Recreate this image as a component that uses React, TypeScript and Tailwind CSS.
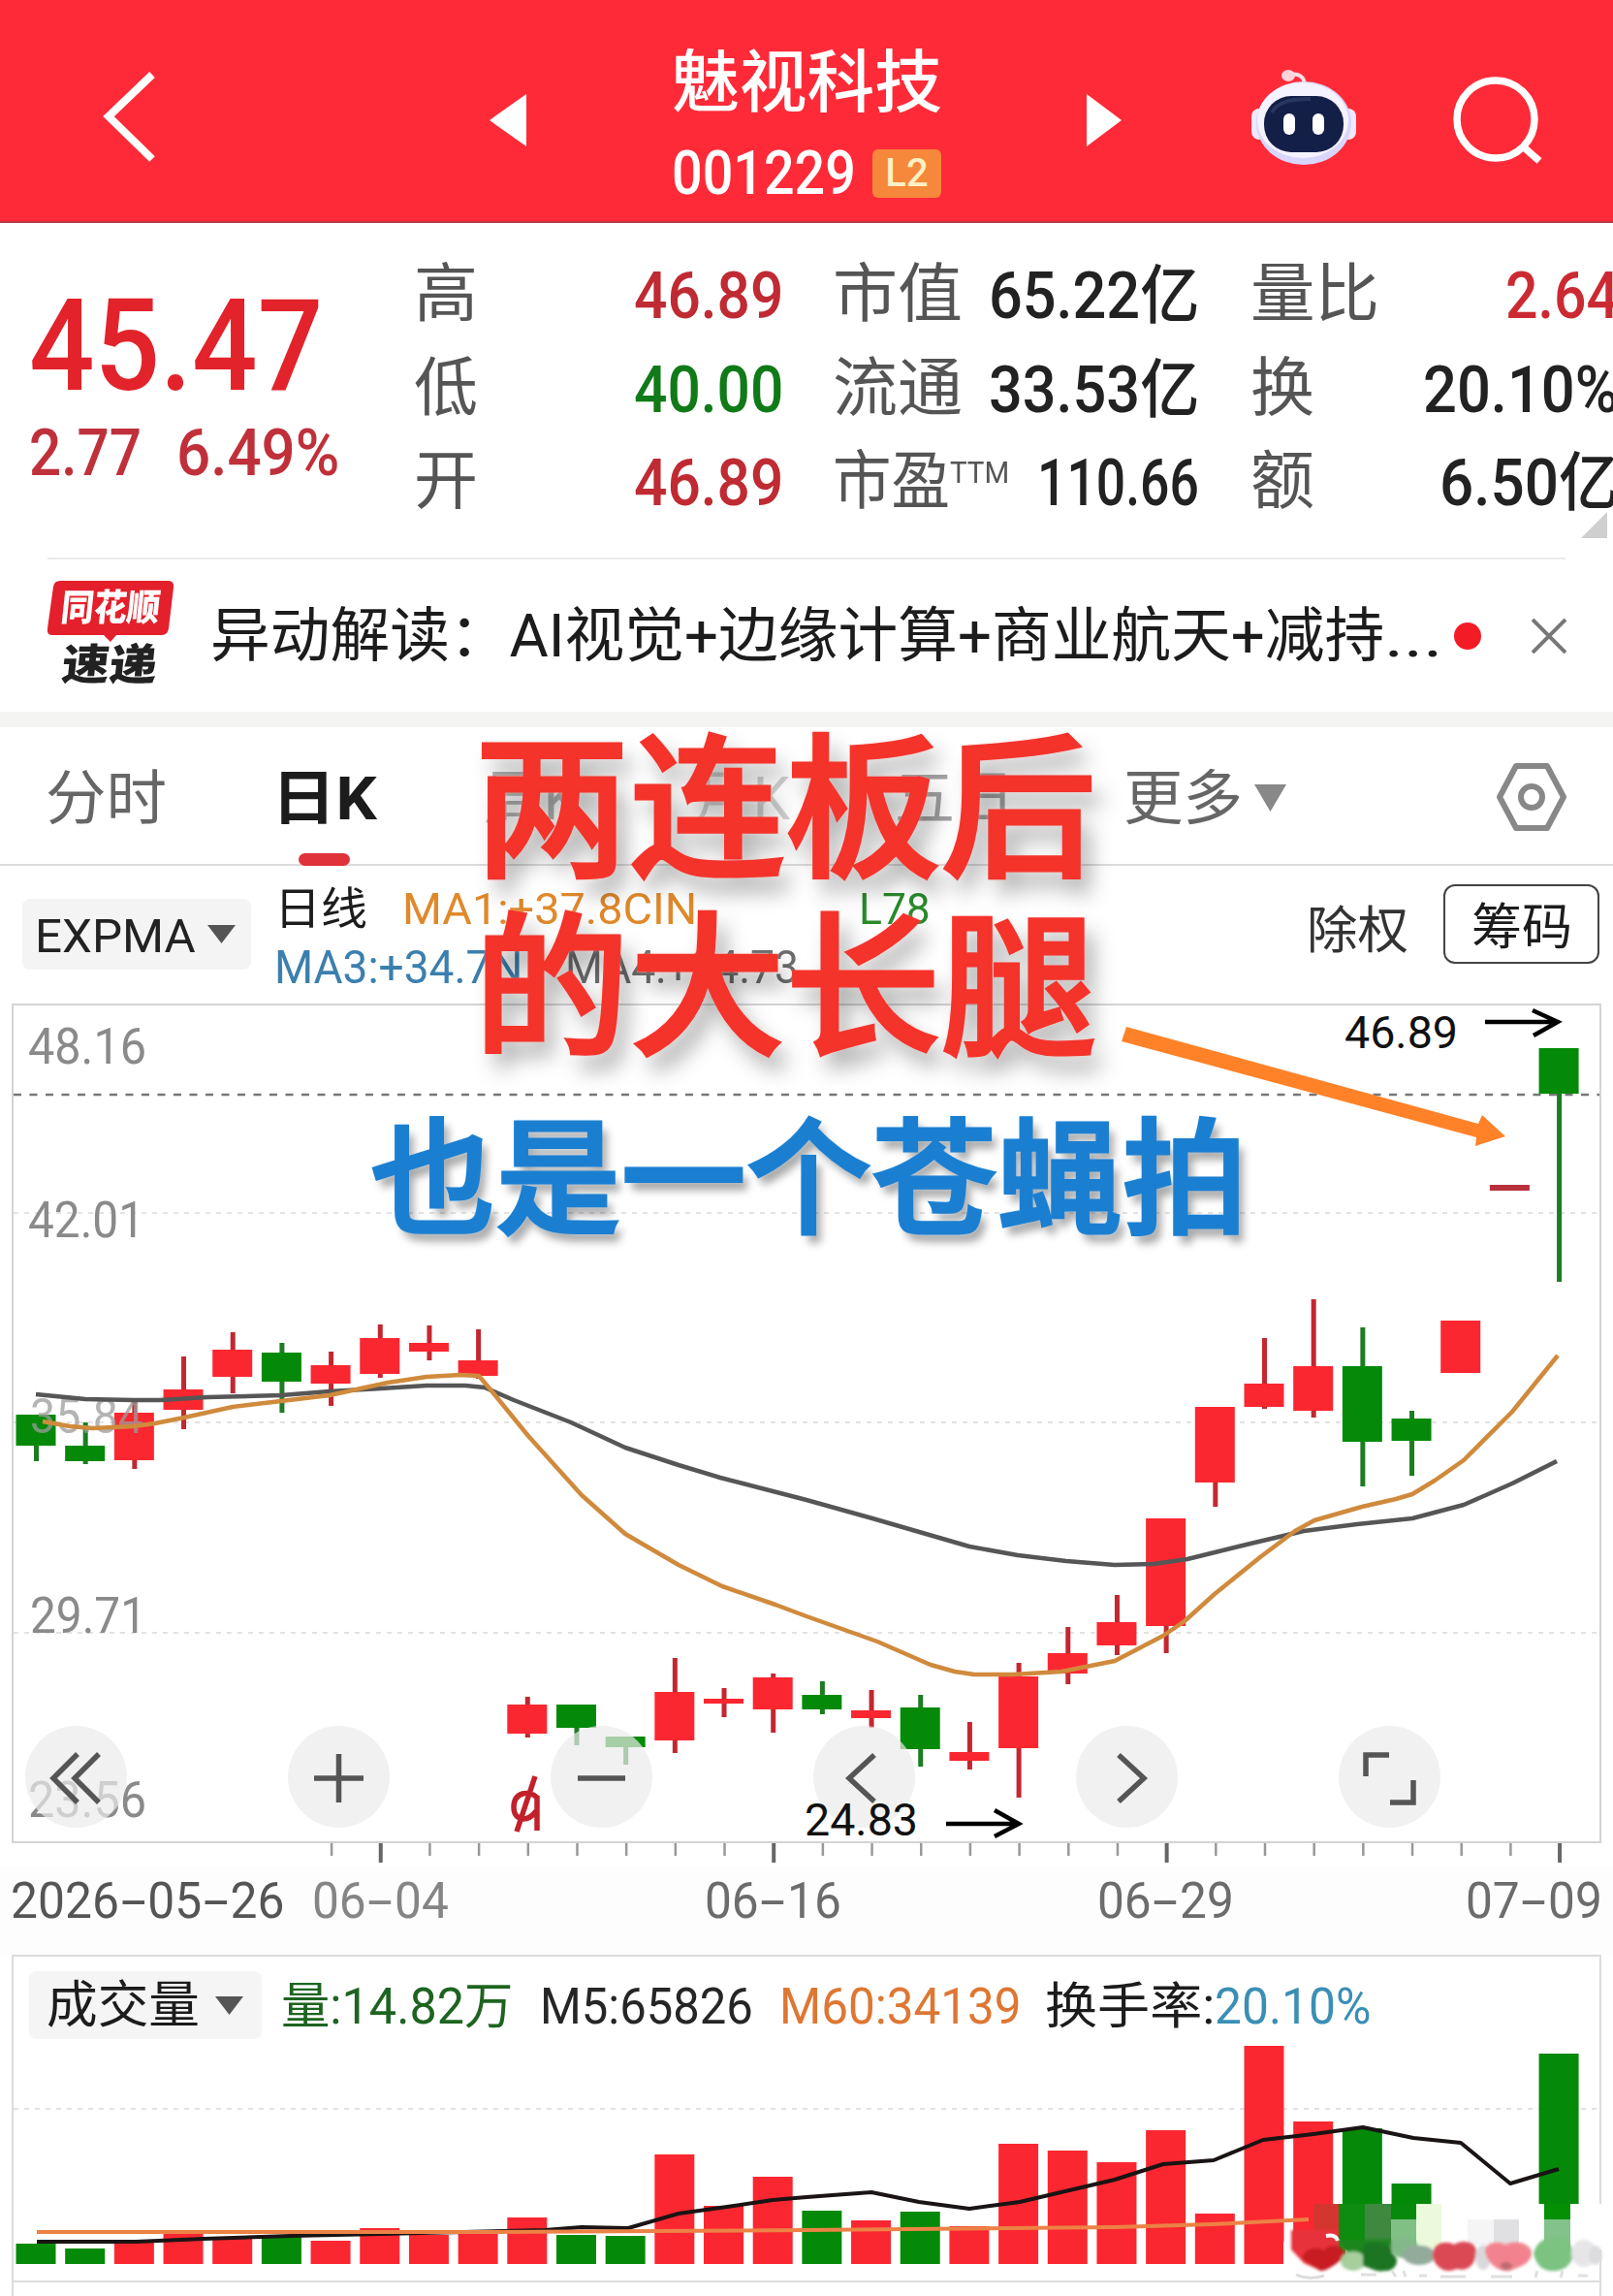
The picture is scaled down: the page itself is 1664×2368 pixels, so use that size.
import { useLayoutEffect, useRef, useState } from 'react';
import type { ReactNode } from 'react';

const RED = '#fb2730';
const GREEN = '#048a08';
const STEP = 50.68;
const FIRST_X = 37;

// [color, bodyTop, bodyBottom, high, low]
const candles: [string, number, number, number, number][] = [
  ['g', 1459, 1491, 1459, 1507],
  ['g', 1491, 1507, 1467, 1510],
  ['r', 1457, 1506, 1445, 1515],
  ['r', 1433, 1454, 1399, 1474],
  ['r', 1392, 1420, 1374, 1437],
  ['g', 1395, 1425, 1385, 1457],
  ['r', 1408, 1427, 1394, 1450],
  ['r', 1380, 1417, 1366, 1421],
  ['r', 1385, 1394, 1367, 1403],
  ['r', 1403, 1419, 1371, 1422],
  ['r', 1758, 1788, 1750, 1792],
  ['g', 1758, 1782, 1758, 1800],
  ['g', 1791, 1802, 1791, 1820],
  ['r', 1745, 1795, 1710, 1808],
  ['r', 1752, 1757, 1741, 1771],
  ['r', 1730, 1763, 1726, 1787],
  ['g', 1748, 1763, 1734, 1768],
  ['r', 1764, 1772, 1743, 1782],
  ['g', 1761, 1804, 1748, 1822],
  ['r', 1807, 1816, 1776, 1825],
  ['r', 1729, 1803, 1715, 1854],
  ['r', 1705, 1726, 1678, 1737],
  ['r', 1673, 1697, 1645, 1707],
  ['r', 1566, 1677, 1566, 1705],
  ['r', 1451, 1529, 1451, 1554],
  ['r', 1427, 1451, 1380, 1453],
  ['r', 1409, 1455, 1340, 1462],
  ['g', 1409, 1487, 1369, 1533],
  ['g', 1463, 1486, 1455, 1522],
  ['r', 1362, 1416, 1362, 1416],
  ['d', 1222, 1228, 1222, 1228],
  ['g', 1081, 1128, 1081, 1322],
];

// [color, barTop]
const volumes: [string, number][] = [
  ['g', 2314], ['g', 2319], ['r', 2312], ['r', 2301], ['r', 2308], ['g', 2306], ['r', 2311], ['r', 2298],
  ['r', 2305], ['r', 2304], ['r', 2287], ['g', 2305], ['g', 2306], ['r', 2222], ['r', 2275], ['r', 2245],
  ['g', 2280], ['r', 2290], ['g', 2281], ['r', 2296], ['r', 2211], ['r', 2218], ['r', 2230], ['r', 2197],
  ['r', 2283], ['r', 2110], ['r', 2188], ['g', 2195], ['g', 2252], ['g', 2335], ['r', 2335], ['g', 2118],
];

const slowLine =
  '37,1438 88,1443 138,1444 165,1444 214,1441 290,1439 340,1435 393,1432 440,1429 480,1429 500,1431 530,1444 589,1467 645,1493 700,1511 743,1524 832,1547 900,1566 1000,1595 1050,1604 1100,1610 1150,1614 1190,1613 1225,1608 1290,1592 1345,1579 1400,1572 1457,1566 1510,1552 1560,1530 1606,1507';
const fastLine =
  '44,1466 72,1471 96,1473 138,1471 160,1468 190,1462 240,1451 290,1445 340,1439 400,1426 440,1420 475,1418 494,1419 505,1432 545,1481 600,1542 645,1582 700,1614 745,1636 800,1655 832,1667 905,1693 960,1717 985,1724 1005,1727 1045,1727 1095,1724 1150,1713 1200,1687 1222,1672 1253,1644 1300,1606 1336,1579 1356,1568 1405,1554 1440,1546 1457,1541 1480,1527 1510,1506 1560,1456 1607,1398';
const volumeM5 =
  '38,2312 140,2312 210,2309 300,2306 393,2304 562,2300 600,2297 648,2298 700,2283 750,2276 797,2269 832,2266 899,2261 948,2271 1000,2278 1052,2271 1150,2248 1200,2232 1252,2228 1303,2207 1355,2201 1406,2194 1458,2205 1507,2210 1558,2252 1608,2237';
const volumeM60 = '38,2302 500,2302 832,2300 1150,2297 1250,2294 1350,2289';

// Stretches or squeezes its text to the width of the box
function Fit({ className, children }: { className: string; children: ReactNode }) {
  const box = useRef<HTMLSpanElement>(null);
  const text = useRef<HTMLSpanElement>(null);
  const [scale, setScale] = useState(1);

  useLayoutEffect(() => {
    if (box.current && text.current) {
      setScale(box.current.clientWidth / text.current.offsetWidth);
    }
  }, []);

  return (
    <span ref={box} className={`block shrink-0 leading-none whitespace-nowrap ${className}`}>
      <span ref={text} className="inline-block origin-left" style={{ transform: `scaleX(${scale})` }}>
        {children}
      </span>
    </span>
  );
}

function Label({ x, w, y, size, fill, children }: { x: number; w: number; y: number; size: number; fill: string; children: string }) {
  return (
    <text x={x} y={y} fontSize={size} fill={fill} textLength={w} lengthAdjust="spacingAndGlyphs">
      {children}
    </text>
  );
}

function Header() {
  return (
    <header className="flex h-[230px] shrink-0 items-start border-b-2 border-[#b93a44] bg-[#fe2a38] text-white">
      <svg className="mt-[73px] ml-[104px] h-24 w-[60px]" viewBox="0 0 60 96" fill="none" stroke="#fff" strokeWidth="8">
        <path d="M53 4 L8 47 L53 91" />
      </svg>
      <svg className="mt-[97px] ml-[341px] h-[54px] w-[38px]" viewBox="0 0 38 54" fill="#fff">
        <path d="M0 27 L38 0 V54 Z" />
      </svg>
      <div className="mt-[51px] ml-[150px] w-[279px]">
        <Fit className="w-[279px] text-[70px] font-medium">魅视科技</Fit>
        <div className="mt-[26px] flex items-center">
          <Fit className="w-[190px] text-[63px] font-medium">001229</Fit>
          <span className="ml-[17px] flex h-[50px] w-[71px] items-center justify-center rounded-md bg-[#f5883a] text-[40px] leading-none font-medium text-[#fdf0c4]">
            L2
          </span>
        </div>
      </div>
      <svg className="mt-[97px] ml-[149px] h-[54px] w-[36px]" viewBox="0 0 36 54" fill="#fff">
        <path d="M36 27 L0 0 V54 Z" />
      </svg>
      <svg className="mt-[68px] ml-[133px] h-[104px] w-[110px]" viewBox="0 0 110 104">
        <path d="M56 20 C56 11 49 7 41 9" fill="none" stroke="#f6dfe6" strokeWidth="4" />
        <ellipse cx="39" cy="10" rx="7" ry="6" fill="#ffd3d8" />
        <rect x="1" y="44" width="16" height="32" rx="8" fill="#efe9fb" />
        <rect x="93" y="44" width="16" height="32" rx="8" fill="#efe9fb" />
        <ellipse cx="55" cy="59" rx="49" ry="43" fill="#d9d6fb" />
        <ellipse cx="54" cy="56" rx="47" ry="39" fill="#f4f3ff" />
        <rect x="14" y="31" width="82" height="58" rx="28" fill="#141f48" />
        <path d="M22 48 C28 37 42 34 62 34" fill="none" stroke="#33456f" strokeWidth="4" opacity=".6" />
        <rect x="34" y="49" width="12" height="22" rx="6" fill="#fff" />
        <rect x="64" y="49" width="12" height="22" rx="6" fill="#fff" />
      </svg>
      <svg className="mt-[75px] ml-[98px] h-24 w-24" viewBox="0 0 96 96" fill="none" stroke="#fff" strokeWidth="7.500">
        <circle cx="45" cy="48" r="40" />
        <path d="M73 76 L90 91" />
      </svg>
    </header>
  );
}

function Quote() {
  return (
    <section className="relative flex h-[345px] shrink-0 overflow-hidden">
      <div className="ml-[30px] w-[320px] shrink-0 pt-[62px]">
        <Fit className="w-[303px] text-[131px] font-medium text-[#e2232b]">45.47</Fit>
        <div className="mt-[12px] flex text-[#c0303a]">
          <Fit className="w-[116px] text-[66px] font-medium">2.77</Fit>
          <Fit className="ml-9 w-[168px] text-[66px] font-medium">6.49%</Fit>
        </div>
      </div>
      <div className="ml-[77px] flex w-[381px] shrink-0 flex-col gap-[28.5px] pt-[41px] text-[66px] text-[#555]">
        <div className="flex justify-between">
          <Fit className="w-[66px]">高</Fit>
          <Fit className="mt-0.5 w-[154px] font-medium text-[#bf2a33]">46.89</Fit>
        </div>
        <div className="flex justify-between">
          <Fit className="w-[66px]">低</Fit>
          <Fit className="mt-0.5 w-[154px] font-medium text-[#117a18]">40.00</Fit>
        </div>
        <div className="flex justify-between">
          <Fit className="w-[66px]">开</Fit>
          <Fit className="mt-0.5 w-[154px] font-medium text-[#bf2a33]">46.89</Fit>
        </div>
      </div>
      <div className="ml-[51px] flex w-[378px] shrink-0 flex-col gap-[28.5px] pt-[41px] text-[66px] text-[#555]">
        <div className="flex justify-between">
          <Fit className="w-[134px]">市值</Fit>
          <Fit className="mt-0.5 w-[217px] font-medium text-[#222]">65.22亿</Fit>
        </div>
        <div className="flex justify-between">
          <Fit className="w-[134px]">流通</Fit>
          <Fit className="mt-0.5 w-[217px] font-medium text-[#222]">33.53亿</Fit>
        </div>
        <div className="flex">
          <Fit className="w-[121px]">市盈</Fit>
          <Fit className="mt-2 w-[61px] text-[31px]">TTM</Fit>
          <Fit className="mt-0.5 ml-auto w-[167px] font-medium text-[#222]">110.66</Fit>
        </div>
      </div>
      <div className="ml-[53px] flex w-[380px] shrink-0 flex-col gap-[28.5px] pt-[41px] text-[66px] text-[#555]">
        <div className="flex justify-between">
          <Fit className="w-[133px]">量比</Fit>
          <Fit className="mt-0.5 w-[117px] font-medium text-[#cc2a33]">2.64</Fit>
        </div>
        <div className="flex justify-between">
          <Fit className="w-[66px]">换</Fit>
          <Fit className="mt-0.5 w-[202px] font-medium text-[#222]">20.10%</Fit>
        </div>
        <div className="flex justify-between">
          <Fit className="w-[66px]">额</Fit>
          <Fit className="mt-0.5 w-[185px] font-medium text-[#222]">6.50亿</Fit>
        </div>
      </div>
      <svg className="absolute right-[6px] bottom-[20px] h-[27px] w-[27px]" viewBox="0 0 27 27">
        <path d="M0 27 L27 0 V27 Z" fill="#cfcfcf" />
      </svg>
    </section>
  );
}

function News() {
  return (
    <section className="mx-[49px] flex h-[159px] shrink-0 items-center border-t-2 border-[#ebebeb]">
      <div className="flex w-[130px] flex-col">
        <div className="relative -mt-1 flex h-[55px] w-[130px] items-center justify-center">
          <svg className="absolute top-0 left-0 h-[63px] w-[131px]" viewBox="0 0 131 63">
            <path d="M13 0 H124 Q131 0 130 7 L125 49 Q124 56 118 56 H71 L65 63 L58 56 H5 Q-1 56 0 49 L6 6 Q7 0 13 0 Z" fill="#e3202b" />
          </svg>
          <Fit className="relative w-[102px] -skew-x-6 text-[38px] font-black text-white">同花顺</Fit>
        </div>
        <Fit className="mt-2.5 ml-[15px] w-[98px] -skew-x-6 text-[44px] font-black text-[#222]">速递</Fit>
      </div>
      <Fit className="mt-0.5 ml-[38px] w-[1211px] text-[61px] text-[#1c1c1c]">异动解读：AI视觉+边缘计算+商业航天+减持</Fit>
      <Fit className="mt-0.5 w-[60px] text-[61px] text-[#1c1c1c]">...</Fit>
      <span className="ml-3 size-7 shrink-0 rounded-full bg-[#f31c25]" />
      <svg className="ml-[52px] h-9 w-9 shrink-0" viewBox="0 0 36 36" stroke="#777" strokeWidth="4">
        <path d="M1 1 L35 35 M35 1 L1 35" />
      </svg>
    </section>
  );
}

function Tabs() {
  return (
    <nav className="flex h-[159px] shrink-0 items-center border-t-[16px] border-b-2 border-t-[#f4f4f2] border-b-[#dcdcdc] pl-[47px] text-[61px] text-[#666]">
      <Fit className="mt-2 w-[125px]">分时</Fit>
      <div className="relative mt-2 ml-[108px]">
        <Fit className="w-[109px] font-bold text-[#1c1c1c]">日K</Fit>
        <span className="absolute -bottom-[38px] left-[28px] h-[13px] w-[53px] rounded-full bg-[#e0323a]" />
      </div>
      <Fit className="mt-2 ml-[110px] w-[100px] opacity-50">周K</Fit>
      <Fit className="mt-2 ml-[116px] w-[100px] opacity-30">月K</Fit>
      <Fit className="mt-2 ml-[108px] w-[124px] opacity-60">五日</Fit>
      <Fit className="mt-2 ml-[112px] w-[123px]">更多</Fit>
      <svg className="mt-1 ml-[12px] h-[28px] w-[33px]" viewBox="0 0 33 28">
        <path d="M0 0 H33 L16.500 28 Z" fill="#888" />
      </svg>
      <svg className="mt-0.5 ml-[215px] h-[72px] w-[76px]" viewBox="0 0 76 72" fill="none" stroke="#888" strokeWidth="6" strokeLinejoin="round">
        <path d="M22 4 H54 L71 36 L54 68 H22 L5 36 Z" />
        <circle cx="38" cy="36" r="11" />
      </svg>
    </nav>
  );
}

function Indicators() {
  return (
    <section className="flex h-[142px] shrink-0 items-start pl-[23px]">
      <div className="mt-[34px] flex h-[73px] w-[236px] shrink-0 items-center rounded-lg bg-[#f4f4f4] pl-[13px]">
        <Fit className="mt-1 w-[166px] text-[49px] text-[#222]">EXPMA</Fit>
        <svg className="ml-[12px] h-[19px] w-[29px]" viewBox="0 0 29 19">
          <path d="M0 0 H29 L14.500 19 Z" fill="#555" />
        </svg>
      </div>
      <div className="mt-[21px] ml-[24px] w-[680px] shrink-0">
        <div className="flex items-center">
          <Fit className="w-[96px] text-[46px] text-[#1c1c1c]">日线</Fit>
          <Fit className="ml-[36px] w-[304px] text-[45px] text-[#e0892b]">MA1:+37.8CIN</Fit>
          <Fit className="ml-[167px] w-[74px] text-[45px] text-[#2a8a2c]">L78</Fit>
        </div>
        <div className="mt-[14px] flex">
          <Fit className="w-[256px] text-[48px] text-[#3b7fae]">MA3:+34.7N</Fit>
          <Fit className="ml-[44px] w-[241px] text-[48px] text-[#6c6c6c]">MA4:+34.73</Fit>
        </div>
      </div>
      <Fit className="mt-[42px] ml-[385px] w-[105px] text-[52px] text-[#333]">除权</Fit>
      <div className="mt-[19px] ml-[36px] flex h-[82px] w-[161px] shrink-0 items-center justify-center rounded-xl border-2 border-[#444]">
        <Fit className="mt-1.5 w-[104px] text-[51px] text-[#1c1c1c]">筹码</Fit>
      </div>
    </section>
  );
}

function RoundButton({ children }: { children: ReactNode }) {
  return (
    <button className="flex size-[105px] items-center justify-center rounded-full bg-[#ebebeb]/70">
      <svg className="size-[105px]" viewBox="0 0 105 105" fill="none" stroke="#555" strokeWidth="5.500">
        {children}
      </svg>
    </button>
  );
}

function PriceChart() {
  return (
    <section className="relative h-[890px] shrink-0">
      <svg className="block h-[890px] w-[1664px]" viewBox="0 1035 1664 890">
        <rect x="13" y="1036" width="1638" height="864" fill="none" stroke="#d4d4d4" strokeWidth="2" />
        <g stroke="#e2e2e2" strokeWidth="2" strokeDasharray="5 6">
          <path d="M14 1251 H1650" />
          <path d="M14 1467 H1650" />
          <path d="M14 1684 H1650" />
        </g>
        <path d="M14 1129 H1650" stroke="#777" strokeWidth="2.500" strokeDasharray="8 8.500" />
        <Label x={29} w={122} y={1097} size={52} fill="#8a8a8a">48.16</Label>
        <Label x={29} w={120} y={1276} size={52} fill="#8a8a8a">42.01</Label>
        <Label x={31} w={120} y={1684} size={52} fill="#8a8a8a">29.71</Label>
        <Label x={29} w={122} y={1874} size={52} fill="#8a8a8a">23.56</Label>

        {candles.map(([kind, top, bottom, high, low], i) => {
          const x = FIRST_X + i * STEP;
          const body = kind === 'g' ? GREEN : kind === 'r' ? RED : '#b8303c';
          return (
            <g key={i}>
              <rect x={x - 2} y={high} width="5" height={low - high} fill={kind === 'g' ? '#1c7c22' : '#c32730'} />
              <rect x={x - 20.5} y={top} width="41" height={bottom - top} fill={body} />
            </g>
          );
        })}
        <g opacity=".75">
          <Label x={31} w={117} y={1478} size={50} fill="#9c9c9c">35.84</Label>
        </g>
        <polyline points={slowLine} fill="none" stroke="#565656" strokeWidth="4.500" strokeLinejoin="round" />
        <polyline points={fastLine} fill="none" stroke="#d08a3c" strokeWidth="4.500" strokeLinejoin="round" />

        {/* ex-rights mark */}
        <g fill="none" stroke="#c2212b" strokeWidth="5.500">
          <path d="M554 1854 C546 1846 530 1848 530 1864 C530 1878 544 1880 553 1868 M554 1852 V1888 M552 1832 L533 1889" />
        </g>

        <Label x={1387} w={117} y={1081} size={46} fill="#111">46.89</Label>
        <path d="M1532 1054 H1606 M1581 1042 L1607 1054 L1582 1068" fill="none" stroke="#000" strokeWidth="4.500" />

        {candles.map((_, i) => {
          if (i < 6) return null;
          const major = i % 8 === 7;
          return (
            <path
              key={i}
              d={`M${FIRST_X + i * STEP + 1} 1901 V${major ? 1921 : 1914}`}
              stroke={major ? '#666' : '#999'}
              strokeWidth={major ? 4 : 2.5}
            />
          );
        })}
      </svg>

      <div className="absolute top-[745px] left-[26px] flex gap-[166px]">
        <RoundButton>
          <path d="M54 29 L29 54 L54 79 M76 29 L51 54 L76 79" />
        </RoundButton>
        <RoundButton>
          <path d="M27 54 H78 M52.500 29 V79" />
        </RoundButton>
        <RoundButton>
          <path d="M28 54 H77" />
        </RoundButton>
        <RoundButton>
          <path d="M63 30 L37 54 L63 78" />
        </RoundButton>
        <RoundButton>
          <path d="M44 30 L70 54 L44 78" />
        </RoundButton>
        <RoundButton>
          <path d="M28 52 V30 H52 M77 56 V79 H53" />
        </RoundButton>
      </div>

      {/* lowest price pointer, drawn above the buttons */}
      <svg className="absolute top-[820px] left-[820px] h-[44px] w-[250px]" viewBox="820 1855 250 44">
        <Label x={830} w={117} y={1893} size={46} fill="#111">24.83</Label>
        <path d="M976 1881 H1050 M1026 1867 L1051 1881 L1026 1894" fill="none" stroke="#000" strokeWidth="4.500" />
      </svg>
    </section>
  );
}

function DateText({ className, value }: { className: string; value: string }) {
  return (
    <Fit className={className}>
      {value.split('-').map((part, i) => (
        <span key={i}>
          {i > 0 && <span className="mx-2 inline-block scale-x-[1.9]">-</span>}
          {part}
        </span>
      ))}
    </Fit>
  );
}

function DateAxis() {
  return (
    <div className="flex h-[91px] shrink-0 bg-[#fdfdfd] pt-[10px] pl-[11px] text-[51px] text-[#6c6c6c]">
      <DateText className="w-[283px] text-[#555]" value="2026-05-26" />
      <DateText className="ml-[28px] w-[141px] text-[#858585]" value="06-04" />
      <DateText className="ml-[264px] w-[141px]" value="06-16" />
      <DateText className="ml-[264px] w-[141px]" value="06-29" />
      <DateText className="ml-[239px] w-[141px]" value="07-09" />
    </div>
  );
}

function VolumePanel() {
  return (
    <section className="shrink-0">
      <div className="mx-[12px] flex h-[87px] items-start border-x-2 border-t-2 border-[#dcdcdc] pt-[15px] pl-[16px] text-[51px]">
        <div className="flex h-[70px] w-[240px] shrink-0 items-center rounded-lg bg-[#f5f5f5] pl-[18px]">
          <Fit className="mt-0.5 w-[158px] text-[52px] text-[#1c1c1c]">成交量</Fit>
          <svg className="ml-[16px] h-[19px] w-[29px]" viewBox="0 0 29 19">
            <path d="M0 0 H29 L14.500 19 Z" fill="#555" />
          </svg>
        </div>
        <Fit className="mt-[11px] ml-[20px] w-[239px] text-[#1e6420]">量:14.82万</Fit>
        <Fit className="mt-[11px] ml-[28px] w-[220px] text-[#262626]">M5:65826</Fit>
        <Fit className="mt-[11px] ml-[27px] w-[250px] text-[#dd7733]">M60:34139</Fit>
        <Fit className="mt-[11px] ml-[24px] w-[175px] text-[#1c1c1c]">换手率:</Fit>
        <Fit className="mt-[11px] w-[161px] text-[#3a8fb5]">20.10%</Fit>
      </div>
      <svg className="block h-[265px] w-[1664px]" viewBox="0 2103 1664 265">
        <path d="M13 2103 V2368 M1651 2103 V2368 M13 2353 H1651" stroke="#dcdcdc" strokeWidth="2" />
        <path d="M14 2175 H1650" stroke="#e2e2e2" strokeWidth="2" strokeDasharray="5 6" />
        {volumes.map(([kind, top], i) => (
          <rect key={i} x={FIRST_X + i * STEP - 20.5} y={top} width="41" height={2335 - top} fill={kind === 'g' ? GREEN : RED} />
        ))}
        <polyline points={volumeM5} fill="none" stroke="#1a1414" strokeWidth="4" strokeLinejoin="round" />
        <polyline points={volumeM60} fill="none" stroke="#ec8245" strokeWidth="4" />

        {/* mosaic over the corner */}
        <rect x="1381" y="2273" width="283" height="47" fill="#fff" />
        <rect x="1355" y="2273" width="26" height="47" fill="#d5352f" />
        <rect x="1381" y="2273" width="27" height="55" fill="#0e8c10" />
        <rect x="1408" y="2273" width="27" height="55" fill="#3e8840" />
        <rect x="1435" y="2273" width="26" height="16" fill="#078a0c" />
        <rect x="1435" y="2289" width="26" height="30" fill="#80c084" />
        <rect x="1461" y="2273" width="26" height="46" fill="#ebfadb" />
        <rect x="1514" y="2289" width="27" height="26" fill="#f5f5f5" />
        <rect x="1541" y="2289" width="26" height="26" fill="#e0e0e2" />
        <rect x="1593" y="2273" width="27" height="16" fill="#048f04" />
        <rect x="1593" y="2289" width="27" height="35" fill="#83c28a" />
        <path d="M1324 2312 L1340 2320 L1362 2341 L1390 2328 L1408 2330 V2346 H1324 Z" fill="#fff" />
        <rect x="1388" y="2320" width="262" height="26" fill="#fff" />
        <filter id="smear" x="-10%" y="-20%" width="120%" height="140%">
          <feGaussianBlur stdDeviation="1.600" />
        </filter>
        <g filter="url(#smear)">
          <path d="M1332 2300 H1380 V2318 L1389 2326 L1363 2342 L1345 2334 L1332 2320 Z" fill="#e8313a" />
          <path d="M1344 2330 C1344 2318 1360 2316 1366 2321 C1372 2312 1386 2316 1389 2326 C1380 2334 1370 2342 1362 2342 Z" fill="#c61d23" />
          <path d="M1381 2310 H1435 V2324 L1405 2334 L1390 2324 Z" fill="#1e861f" />
          <ellipse cx="1396" cy="2332" rx="13" ry="10" fill="#a6cf9c" />
          <path d="M1406 2316 C1420 2308 1438 2316 1436 2324 C1446 2330 1440 2343 1428 2342 C1420 2344 1412 2338 1406 2337 Z" fill="#1d7423" />
          <ellipse cx="1449" cy="2318" rx="14" ry="11" fill="#83b98a" />
          <ellipse cx="1464" cy="2326" rx="17" ry="10" fill="#93ab9b" />
          <path d="M1478 2326 C1478 2313 1492 2310 1500 2315 C1508 2309 1524 2312 1523 2323 C1522 2336 1514 2343 1503 2340 C1492 2345 1480 2340 1478 2326 Z" fill="#db4955" />
          <ellipse cx="1530" cy="2328" rx="8" ry="13" fill="#d9d9dc" />
          <path d="M1532 2322 C1532 2312 1546 2311 1553 2315 C1564 2309 1581 2314 1580 2325 C1578 2336 1566 2338 1558 2342 C1546 2344 1534 2334 1532 2322 Z" fill="#f2838e" />
          <ellipse cx="1554" cy="2337" rx="6" ry="4" fill="#bf6c73" />
          <path d="M1582 2324 C1586 2308 1602 2306 1608 2308 C1620 2308 1622 2320 1623 2326 C1620 2340 1608 2343 1600 2342 C1590 2342 1584 2334 1582 2324 Z" fill="#7cc381" />
          <ellipse cx="1634" cy="2324" rx="13" ry="14" fill="#e6e6e8" />
          <ellipse cx="1646" cy="2326" rx="7" ry="10" fill="#dcdcde" />
        </g>
        <path d="M1337 2346 Q1350 2352 1366 2347" fill="none" stroke="#dcdcdc" strokeWidth="3" />
        <path d="M1368 2306 Q1378 2304 1380 2311" fill="none" stroke="#fff" strokeWidth="4" />
        <path d="M1404 2346 H1420 M1436 2342 L1440 2348 M1448 2342 L1450 2348 M1464 2347 H1472 M1486 2348 H1512 M1538 2348 H1560 M1586 2342 L1584 2349 M1612 2342 L1610 2349 M1628 2347 H1638" fill="none" stroke="#e0e0e0" strokeWidth="3" />
      </svg>
    </section>
  );
}

function Captions() {
  return (
    <>
      <div className="absolute top-[758px] left-[489px] font-medium text-[#f4332b] [-webkit-text-stroke:3px_#f4332b] [text-shadow:0_0_4px_#ffc9c4,10px_16px_22px_rgba(0,0,0,0.35)]">
        <Fit className="w-[642px] text-[160px]">两连板后</Fit>
        <Fit className="mt-[24px] w-[642px] text-[160px]">的大长腿</Fit>
      </div>
      <Fit className="absolute top-[1153px] left-[382px] w-[905px] text-[130px] font-medium text-[#1b7fd1] [-webkit-text-stroke:3px_#1b7fd1] [text-shadow:0_0_4px_#a9d5fa,6px_9px_9px_rgba(0,0,0,0.35)]">
        也是一个苍蝇拍
      </Fit>
      <svg className="absolute top-[1050px] left-[1150px] h-[140px] w-[410px]" viewBox="1150 1050 410 140">
        <path d="M1162 1059 L1525 1159 L1529 1150 L1553 1172 L1522 1182 L1523 1173 L1157 1074 Z" fill="#ff8229" />
      </svg>
    </>
  );
}

export default function App() {
  return (
    <div
      lang="zh-CN"
      className="relative flex h-[2368px] w-[1664px] flex-col overflow-hidden bg-white font-['Roboto','Noto_Sans_CJK_SC',sans-serif]"
    >
      <Header />
      <Quote />
      <News />
      <Tabs />
      <Indicators />
      <PriceChart />
      <DateAxis />
      <VolumePanel />
      <Captions />
    </div>
  );
}
